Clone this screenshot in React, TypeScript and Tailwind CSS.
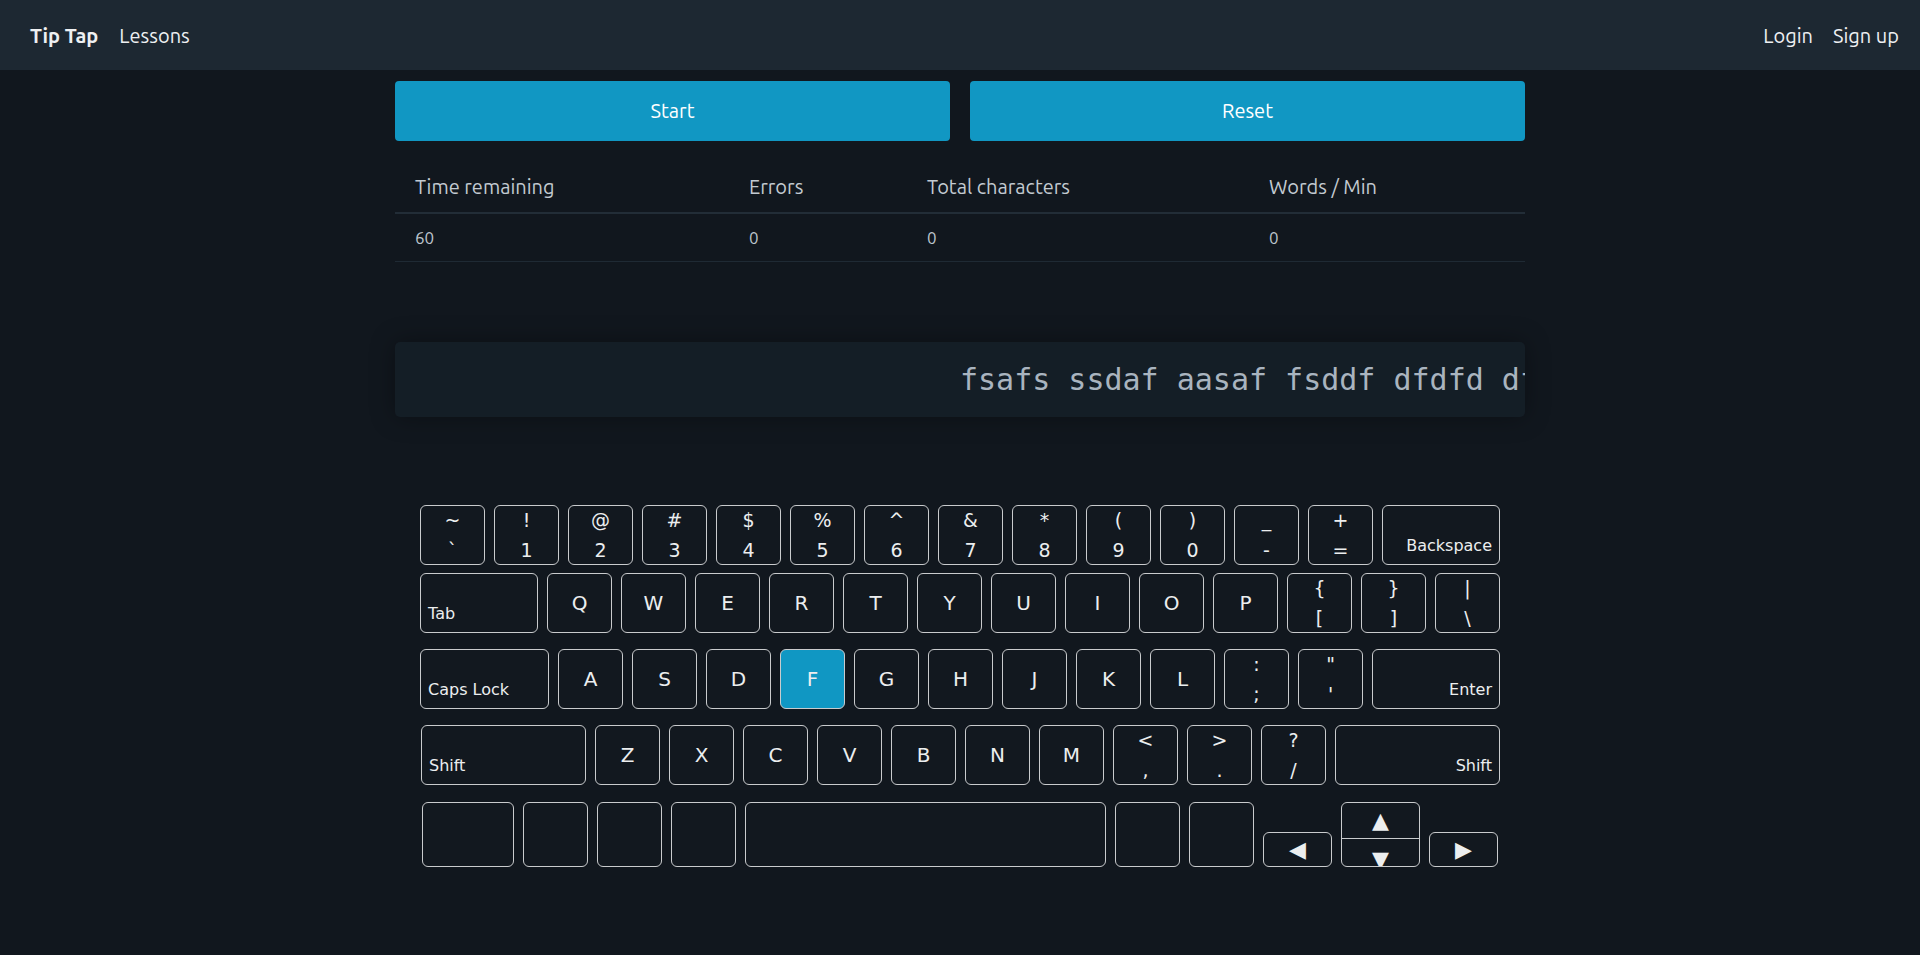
import type { ReactNode } from "react";

const ui = "font-['Ubuntu','Noto_Sans','Open_Sans',sans-serif]";
const keyFont = "font-['DejaVu_Sans','Liberation_Sans',sans-serif]";

type KeyProps = {
  w?: string;
  h?: string;
  active?: boolean;
  children?: ReactNode;
  className?: string;
};

function Key({ w = "w-[65px]", h = "h-[60px]", active, children, className = "" }: KeyProps) {
  return (
    <div
      className={`${w} ${h} shrink-0 rounded-[6px] border border-[#c9cbcd] text-[#eceeef] ${
        active ? "bg-[#1097c3]" : "bg-[#12181f]"
      } ${className}`}
    >
      {children}
    </div>
  );
}

function Letter({ ch, active }: { ch: string; active?: boolean }) {
  return (
    <Key active={active} className="flex items-center justify-center text-[20px]">
      {ch}
    </Key>
  );
}

function Pair({ top, bottom }: { top: string; bottom: string }) {
  return (
    <Key className="flex flex-col items-center justify-center text-[19px] leading-[30px]">
      <span>{top}</span>
      <span>{bottom}</span>
    </Key>
  );
}

function Named({ label, w, right }: { label: string; w: string; right?: boolean }) {
  return (
    <Key
      w={w}
      className={`flex items-end pb-[6px] text-[16px] leading-[24px] ${
        right ? "justify-end pr-[7px]" : "justify-start pl-[7px]"
      }`}
    >
      {label}
    </Key>
  );
}

const stats = [
  { label: "Time remaining", value: "60", w: "w-[334px]" },
  { label: "Errors", value: "0", w: "w-[178px]" },
  { label: "Total characters", value: "0", w: "w-[342px]" },
  { label: "Words / Min", value: "0", w: "flex-1" },
];

export default function App() {
  const row1: [string, string][] = [
    ["~", "`"],
    ["!", "1"],
    ["@", "2"],
    ["#", "3"],
    ["$", "4"],
    ["%", "5"],
    ["^", "6"],
    ["&", "7"],
    ["*", "8"],
    ["(", "9"],
    [")", "0"],
    ["_", "-"],
    ["+", "="],
  ];

  return (
    <div className={`min-h-screen bg-[#11171e] ${ui}`}>
      <nav className="h-[70px] bg-[#1d2832] flex items-center justify-between pl-[30px] pr-[21px] pt-[2px] text-[20px] text-[#eef0f2]">
        <div className="flex items-center gap-[21px]">
          <span className="font-bold">Tip Tap</span>
          <span>Lessons</span>
        </div>
        <div className="flex items-center gap-[20px]">
          <span>Login</span>
          <span>Sign up</span>
        </div>
      </nav>

      <main className="w-[1130px] mx-auto pt-[11px]">
        <div className="flex gap-[20px]">
          <button className="flex-1 h-[60px] rounded-[4px] bg-[#1197c3] text-white text-[20px]">Start</button>
          <button className="flex-1 h-[60px] rounded-[4px] bg-[#1197c3] text-white text-[20px]">Reset</button>
        </div>

        <div className="mt-[21px]">
          <div className="flex border-b-2 border-[#222d37] text-[20px] text-[#c3cad1]">
            {stats.map((s) => (
              <div key={s.label} className={`${s.w} px-[20px] h-[50px] flex items-center`}>
                {s.label}
              </div>
            ))}
          </div>
          <div className="flex border-b border-[#1f2a34] text-[17px] text-[#bcc4cc]">
            {stats.map((s) => (
              <div key={s.label} className={`${s.w} px-[20px] h-[47px] flex items-center`}>
                {s.value}
              </div>
            ))}
          </div>
        </div>

        <div className="mt-[80px] h-[75px] rounded-[5px] bg-[#141e26] shadow-[0_0_24px_rgba(0,0,0,0.35)] overflow-hidden flex items-center">
          <div className="pl-[565px] whitespace-nowrap font-['DejaVu_Sans_Mono','Liberation_Mono',monospace] text-[30px] leading-[36px] text-[#a9b4bf]">
            fsafs ssdaf aasaf fsddf dfdfd dfsaf sdfas afdsa
          </div>
        </div>
      </main>

      <div className={`w-[1080px] mx-auto mt-[88px] flex flex-col ${keyFont}`}>
        <div className="flex gap-[9px]">
          {row1.map(([t, b]) => (
            <Pair key={b} top={t} bottom={b} />
          ))}
          <Named label="Backspace" w="w-[118px]" right />
        </div>

        <div className="flex gap-[9px] mt-[8px]">
          <Named label="Tab" w="w-[118px]" />
          {"QWERTYUIOP".split("").map((c) => (
            <Letter key={c} ch={c} />
          ))}
          <Pair top="{" bottom="[" />
          <Pair top="}" bottom="]" />
          <Pair top="|" bottom="\" />
        </div>

        <div className="flex gap-[9px] mt-[16px]">
          <Named label="Caps Lock" w="w-[129px]" />
          {"ASDFGHJKL".split("").map((c) => (
            <Letter key={c} ch={c} active={c === "F"} />
          ))}
          <Pair top=":" bottom=";" />
          <Pair top={'"'} bottom="'" />
          <Named label="Enter" w="w-[128px]" right />
        </div>

        <div className="flex gap-[9px] mt-[16px] pl-[1px]">
          <Named label="Shift" w="w-[165px]" />
          {"ZXCVBNM".split("").map((c) => (
            <Letter key={c} ch={c} />
          ))}
          <Pair top="<" bottom="," />
          <Pair top=">" bottom="." />
          <Pair top="?" bottom="/" />
          <Named label="Shift" w="w-[165px]" right />
        </div>

        <div className="flex items-end gap-[9px] mt-[17px] pl-[2px]">
          <Key w="w-[92px]" h="h-[65px]" />
          <Key h="h-[65px]" />
          <Key h="h-[65px]" />
          <Key h="h-[65px]" />
          <Key w="w-[361px]" h="h-[65px]" />
          <Key h="h-[65px]" />
          <Key h="h-[65px]" />
          <Key w="w-[69px]" h="h-[35px]" className="flex items-center justify-center text-[22px] leading-none">
            ◀
          </Key>
          <Key w="w-[79px]" h="h-[65px]" className="flex flex-col overflow-hidden">
            <div className="h-[36px] shrink-0 border-b border-[#c9cbcd] flex items-center justify-center text-[22px] leading-none">
              ▲
            </div>
            <div className="flex-1 flex items-start justify-center pt-[10px] text-[22px] leading-none">▼</div>
          </Key>
          <Key w="w-[69px]" h="h-[35px]" className="flex items-center justify-center text-[22px] leading-none">
            ▶
          </Key>
        </div>
      </div>
    </div>
  );
}
